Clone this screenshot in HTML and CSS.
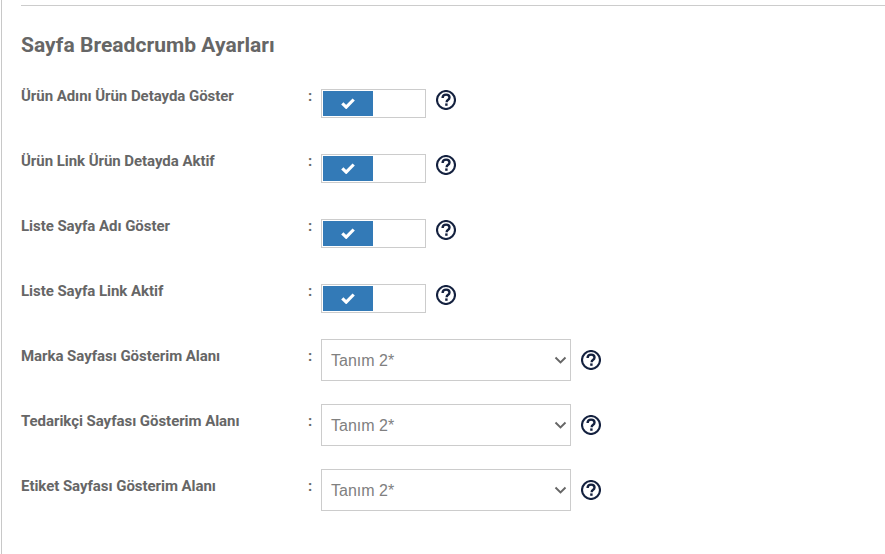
FILE: index.html
```html
<!DOCTYPE html>
<html lang="tr">
<head>
<meta charset="utf-8">
<title>Sayfa Breadcrumb Ayarları</title>
<link rel="stylesheet" href="styles.css">
</head>
<body>
<svg class="defs" width="0" height="0" aria-hidden="true">
  <symbol id="help" viewBox="0 0 20 20">
    <circle cx="10" cy="10" r="9" fill="none" stroke="#14213f" stroke-width="2.1"/>
    <path d="M6.6 7.9c0-2.1 1.4-3.3 3.5-3.3 2 0 3.4 1.1 3.4 2.9 0 1.3-.7 2-1.6 2.6-.9.6-1.2 1-1.2 1.8v.3" fill="none" stroke="#14213f" stroke-width="2.4"/>
    <rect x="9.2" y="13.4" width="2.4" height="2.4" fill="#14213f"/>
  </symbol>
  <symbol id="check" viewBox="0 0 14 11">
    <path d="M1.3 5.4l3.9 3.7 7.5-7.6" fill="none" stroke="#fff" stroke-width="3.2"/>
  </symbol>
  <symbol id="chev" viewBox="0 0 12 8">
    <path d="M1 1.5l5 5 5-5" fill="none" stroke="#666" stroke-width="1.9"/>
  </symbol>
</svg>
<main class="panel">
  <div class="content">
    <h2 class="title">Sayfa Breadcrumb Ayarları</h2>

    <div class="row">
      <label class="label">Ürün Adını Ürün Detayda Göster</label>
      <span class="colon">:</span>
      <div class="toggle"><span class="knob"><svg class="check"><use href="#check"/></svg></span></div>
      <svg class="help"><use href="#help"/></svg>
    </div>
    <div class="row">
      <label class="label">Ürün Link Ürün Detayda Aktif</label>
      <span class="colon">:</span>
      <div class="toggle"><span class="knob"><svg class="check"><use href="#check"/></svg></span></div>
      <svg class="help"><use href="#help"/></svg>
    </div>
    <div class="row">
      <label class="label">Liste Sayfa Adı Göster</label>
      <span class="colon">:</span>
      <div class="toggle"><span class="knob"><svg class="check"><use href="#check"/></svg></span></div>
      <svg class="help"><use href="#help"/></svg>
    </div>
    <div class="row">
      <label class="label">Liste Sayfa Link Aktif</label>
      <span class="colon">:</span>
      <div class="toggle"><span class="knob"><svg class="check"><use href="#check"/></svg></span></div>
      <svg class="help"><use href="#help"/></svg>
    </div>
    <div class="row">
      <label class="label">Marka Sayfası Gösterim Alanı</label>
      <span class="colon">:</span>
      <div class="select"><span class="value">Tanım 2*</span><svg class="chev"><use href="#chev"/></svg></div>
      <svg class="help"><use href="#help"/></svg>
    </div>
    <div class="row">
      <label class="label">Tedarikçi Sayfası Gösterim Alanı</label>
      <span class="colon">:</span>
      <div class="select"><span class="value">Tanım 2*</span><svg class="chev"><use href="#chev"/></svg></div>
      <svg class="help"><use href="#help"/></svg>
    </div>
    <div class="row">
      <label class="label">Etiket Sayfası Gösterim Alanı</label>
      <span class="colon">:</span>
      <div class="select"><span class="value">Tanım 2*</span><svg class="chev"><use href="#chev"/></svg></div>
      <svg class="help"><use href="#help"/></svg>
    </div>
  </div>
</main>
</body>
</html>
```
FILE: styles.css
```css
* { box-sizing: border-box; }
html, body { margin: 0; height: 100%; background: #fff; overflow: hidden; }
.defs { position: absolute; }
.panel {
  margin-left: 1px;
  height: 554px;
  border-left: 1px solid #c8c8c8;
  padding: 5px 0 0 19px;
  font-family: Roboto, sans-serif;
}
.content { border-top: 1px solid #ccc; }
.title {
  margin: 27px 0 0;
  font-size: 21px;
  line-height: 24px;
  font-weight: 700;
  color: #666;
  letter-spacing: 0.04px;
}
.row {
  display: flex;
  align-items: flex-start;
  height: 65px;
}
.title + .row { margin-top: 22px; }
.label {
  width: 287px;
  margin-top: 10px;
  font-size: 15px;
  line-height: 15px;
  font-weight: 700;
  color: #666;
  flex: none;
  letter-spacing: -0.05px;
}
.colon {
  width: 13px;
  margin-top: 10px;
  flex: none;
  font-size: 15px;
  line-height: 15px;
  font-weight: 700;
  color: #666;
}
.toggle {
  width: 105px;
  height: 29px;
  margin-top: 10px;
  border: 1px solid #ccc;
  padding: 1px;
  flex: none;
  background: #fff;
}
.knob {
  display: flex;
  align-items: center;
  justify-content: center;
  width: 50px;
  height: 25px;
  background: #337ab7;
}
.check { width: 14px; height: 11px; }
.help { width: 20px; height: 20px; margin: 11px 0 0 10px; flex: none; }
.select {
  width: 250px;
  height: 42px;
  flex: none;
  border: 1px solid #ccc;
  background: #fff;
  padding: 0 3px 0 9px;
  display: flex;
  align-items: center;
  justify-content: space-between;
  font-family: "Liberation Sans", Arial, sans-serif;
  font-size: 16px;
  color: #808080;
}
.value { padding-top: 1px; }
.chev { width: 13px; height: 8px; }
```
